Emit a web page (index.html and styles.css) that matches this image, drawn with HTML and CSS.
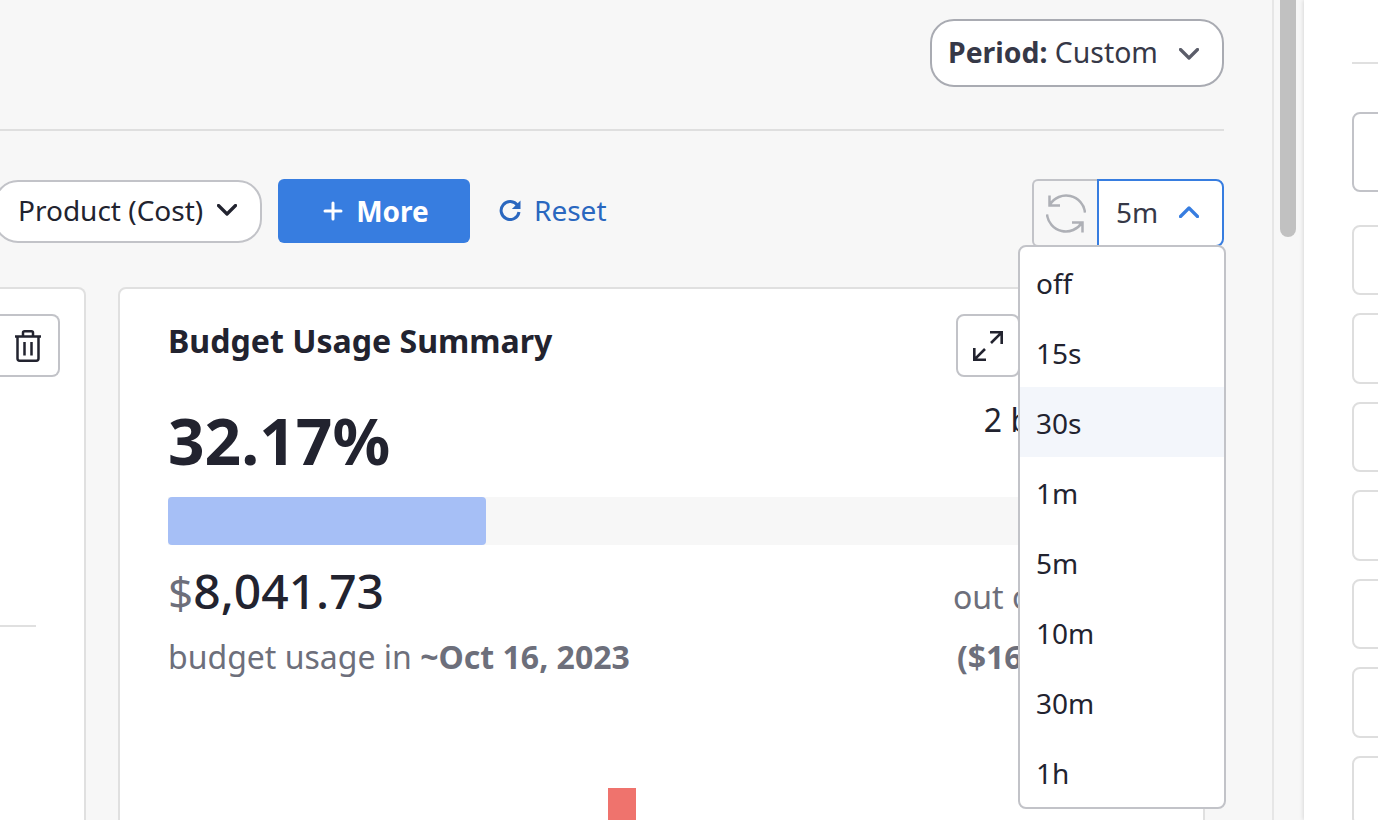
FILE: index.html
```html
<!DOCTYPE html>
<html>
<head>
	<title>Budget Usage Summary</title>
	<meta charset="utf-8">
	<link rel="stylesheet" href="styles.css">
</head>
<body>

<div class="page">
	<div class="main">
		<div class="topbar">
			<button class="period">
				<span><b>Period:</b> Custom</span>
				<svg class="chevron" viewBox="0 0 20 12"><path d="M1.5 1.5 10 10l8.5-8.5"/></svg>
			</button>
		</div>

		<div class="filters">
			<button class="pill">
				<span>Product (Cost)</span>
				<svg class="chevron dark" viewBox="0 0 20 12"><path d="M1.5 1.5 10 10l8.5-8.5"/></svg>
			</button>
			<button class="more">
				<svg class="plus" viewBox="0 0 20 20"><path d="M10 2v16M2 10h16"/></svg>
				More
			</button>
			<a class="reset">
				<svg viewBox="0 0 22 22"><path class="arc" d="M18.6 6.5A9 9 0 1 0 20 13"/><path class="head" d="M21.5 1.5v8.6h-8.6z"/></svg>
				Reset
			</a>
			<div class="refresh">
				<div class="refresh-btn">
					<svg viewBox="0 0 40 40"><path d="M4 11A19 19 0 0 1 39 19M3.5 2v10H14M1 21a19 19 0 0 0 35 8M26 29h10.500v10"/></svg>
				</div>
				<div class="interval">
					<span>5m</span>
					<svg class="chevron blue" viewBox="0 0 20 12"><path d="M1.500 10.500 10 2l8.500 8.500"/></svg>
				</div>
				<ul class="menu">
					<li>off</li>
					<li>15s</li>
					<li class="hover">30s</li>
					<li>1m</li>
					<li>5m</li>
					<li>10m</li>
					<li>30m</li>
					<li>1h</li>
				</ul>
			</div>
		</div>

		<div class="cards">
			<div class="card card-cut">
				<div class="card-head">
					<button class="icon-btn">
						<svg class="trash" viewBox="0 0 28 32"><path d="M1 6.500h26M9 6V2.800C9 1.800 9.800 1.300 10.600 1.300h6.800c.8 0 1.600.5 1.600 1.500V6M3.500 6.500v22c0 1.300.9 2.200 2.200 2.200h16.600c1.300 0 2.200-.9 2.200-2.200v-22M10.500 12v13.500M17.500 12v13.500"/></svg>
					</button>
				</div>
				<div class="cut-line"></div>
			</div>

			<div class="card card-main">
				<div class="card-head">
					<h2>Budget Usage Summary</h2>
					<div class="actions">
						<button class="icon-btn">
							<svg class="expand" viewBox="0 0 30 30"><path d="M17 1.300h11.700V13M28.700 1.300 18 12M13 28.700H1.300V17M1.300 28.700 12 18"/></svg>
						</button>
						<button class="icon-btn"></button>
						<button class="icon-btn"></button>
					</div>
				</div>
				<div class="card-body">
					<div class="stats">
						<div class="percent">32.17%</div>
						<div class="cell count">2 budgets</div>
					</div>
					<div class="bar"><div class="bar-fill" style="width: 32.17%"></div></div>
					<div class="amounts">
						<div class="amount"><span class="dollar">$</span>8,041.73</div>
						<div class="cell total">out of $25,000</div>
					</div>
					<div class="notes">
						<div>budget usage in <b>~Oct 16, 2023</b></div>
						<div class="cell remaining"><b>($16,958.27)</b></div>
					</div>
					<div class="chart"><div class="chart-bar"></div></div>
				</div>
			</div>
		</div>
	</div>

	<div class="gutter"><div class="thumb"></div></div>

	<div class="side">
		<div class="side-line"></div>
		<div class="side-box first"></div>
		<div class="side-list">
			<div class="side-box"></div>
			<div class="side-box"></div>
			<div class="side-box"></div>
			<div class="side-box"></div>
			<div class="side-box"></div>
			<div class="side-box"></div>
			<div class="side-box"></div>
		</div>
	</div>
</div>

</body>
</html>
```

FILE: styles.css
```css
* {
	box-sizing: border-box;
}
body {
	margin: 0;
	font-family: "Noto Sans", sans-serif;
	color: #22232f;
	background: #f7f7f7;
}
button {
	font-family: inherit;
	cursor: pointer;
}
.page {
	display: flex;
	height: 820px;
	overflow: hidden;
}
.main {
	flex: none;
	width: 1274px;
	height: 820px;
	padding-right: 48px;
	border-right: 2px solid #e6e6e6;
	overflow: hidden;
}
.topbar {
	display: flex;
	justify-content: flex-end;
	height: 131px;
	padding-top: 19px;
	border-bottom: 2px solid #dfdfdf;
}
.chevron {
	flex: none;
	width: 20px;
	height: 12px;
	fill: none;
	stroke: #5b5d69;
	stroke-width: 3.2;
	stroke-linecap: round;
	stroke-linejoin: round;
}
.chevron.dark {
	stroke: #22232f;
}
.chevron.blue {
	stroke: #377de0;
}
.period {
	display: flex;
	align-items: center;
	justify-content: space-between;
	width: 294px;
	height: 68px;
	padding: 0 23px 0 16px;
	border: 2px solid #a9abb2;
	border-radius: 24px;
	background: #fff;
	color: #363847;
	font-size: 28.400px;
}
.period span {
	margin-bottom: 2px;
}
.period .chevron {
	margin-top: 1px;
}
.filters {
	display: flex;
	align-items: flex-start;
	height: 108px;
	margin-top: 48px;
}
.pill {
	display: flex;
	align-items: center;
	gap: 14px;
	width: 268px;
	height: 63px;
	margin: 1px 0 0 -6px;
	padding: 0 22px 4px 22px;
	border: 2px solid #c2c3c8;
	border-radius: 24px;
	background: #fff;
	color: #22232f;
	font-size: 28px;
	white-space: nowrap;
}
.more {
	display: flex;
	align-items: center;
	justify-content: center;
	gap: 13px;
	width: 192px;
	height: 64px;
	margin-left: 16px;
	padding: 0 0 0 4px;
	border: 0;
	border-radius: 6px;
	background: #377de0;
	color: #fff;
	font-size: 28px;
	font-weight: 700;
}
.plus {
	width: 20px;
	height: 20px;
	fill: none;
	stroke: #fff;
	stroke-width: 3;
	stroke-linecap: round;
}
.reset {
	display: flex;
	align-items: center;
	gap: 13px;
	height: 62px;
	margin-left: 29px;
	color: #2a67bf;
	font-size: 28px;
}
.reset svg {
	width: 22px;
	height: 22px;
}
.reset .arc {
	fill: none;
	stroke: #2a67bf;
	stroke-width: 3;
}
.reset .head {
	fill: #2a67bf;
}
.refresh {
	position: relative;
	display: flex;
	height: 68px;
	margin-left: auto;
}
.refresh-btn {
	display: flex;
	align-items: center;
	justify-content: center;
	width: 65px;
	border: 2px solid #c2c3c8;
	border-right: 0;
	border-radius: 6px 0 0 6px;
}
.refresh-btn svg {
	width: 40px;
	height: 41px;
	fill: none;
	stroke: #aeb0b6;
	stroke-width: 2.500;
}
.interval {
	display: flex;
	align-items: center;
	justify-content: space-between;
	width: 127px;
	padding: 0 23px 2px 17px;
	border: 2px solid #377de0;
	border-radius: 0 8px 8px 0;
	background: #fff;
	color: #363847;
	font-size: 28px;
}
.menu {
	position: absolute;
	z-index: 5;
	top: 66px;
	right: -2px;
	width: 208px;
	margin: 0;
	padding: 0;
	list-style: none;
	background: #fff;
	border: 2px solid #c2c3c8;
	border-radius: 8px;
}
.menu li {
	height: 70px;
	padding-left: 16px;
	font-size: 28px;
	line-height: 72px;
}
.menu .hover {
	background: #f3f6fb;
}
.cards {
	display: flex;
	gap: 32px;
	height: 560px;
}
.card {
	background: #fff;
	border: 2px solid #e0e0e0;
	border-radius: 8px;
}
.card-cut {
	flex: none;
	width: 86px;
	border-left: 0;
	border-radius: 0 8px 0 0;
}
.card-main {
	flex: none;
	width: 1087px;
}
.card-head {
	display: flex;
	align-items: center;
	justify-content: space-between;
	padding: 25px 24px 0 48px;
}
.card-cut .card-head {
	justify-content: flex-end;
	padding-left: 0;
}
.card-head h2 {
	margin: 0 0 9px;
	font-size: 32.100px;
	font-weight: 700;
	line-height: 44px;
}
.actions {
	display: flex;
	gap: 15.500px;
}
.icon-btn {
	display: flex;
	align-items: center;
	justify-content: center;
	width: 64px;
	height: 63px;
	padding: 0;
	border: 2px solid #c2c3c8;
	border-radius: 8px;
	background: #fff;
}
.card-cut .icon-btn {
	border-left: 0;
	border-radius: 0 8px 8px 0;
	flex: none;
	width: 60px;
	padding-right: 3px;
}
.trash {
	width: 28px;
	height: 32px;
	fill: none;
	stroke: #22232f;
	stroke-width: 2.500;
}
.expand {
	width: 30px;
	height: 30px;
	fill: none;
	stroke: #22232f;
	stroke-width: 2.600;
}
.cut-line {
	height: 2px;
	margin-top: 248px;
	margin-right: 48px;
	background: #e0e0e0;
}
.card-body {
	padding: 0 47px 0 48px;
}
.stats,
.amounts,
.notes {
	display: flex;
	justify-content: space-between;
}
.stats {
	align-items: flex-start;
	height: 120px;
}
.cell {
	flex: none;
	width: 220px;
	margin-right: -15px;
	text-align: center;
}
.percent {
	margin-top: 20px;
	font-size: 64px;
	font-weight: 700;
	line-height: 88px;
}
.count {
	margin-top: 22px;
	margin-right: -13px;
	font-size: 32px;
	line-height: 42px;
}
.bar {
	height: 48px;
	background: #f7f7f7;
}
.bar-fill {
	height: 100%;
	background: #a6bff6;
	border-radius: 4px;
}
.amounts {
	align-items: center;
	height: 90px;
}
.amount {
	font-size: 48px;
	font-weight: 500;
}
.dollar {
	color: #6d6f7b;
	font-size: 44px;
	font-weight: 400;
}
.total {
	margin-top: 12px;
	font-size: 32px;
	color: #6d6f7b;
}
.notes {
	margin-top: 2px;
	font-size: 32px;
	line-height: 40px;
	color: #6d6f7b;
}
.remaining {
	margin-right: -4px;
}
.chart {
	position: relative;
	height: 111px;
}
.chart-bar {
	position: absolute;
	left: 440px;
	top: 111px;
	width: 28px;
	height: 40px;
	background: #ef736d;
}
.gutter {
	flex: none;
	width: 30px;
	padding-left: 6px;
}
.thumb {
	width: 16px;
	height: 237px;
	background: #c1c1c1;
	border-radius: 0 0 8px 8px;
}
.side {
	flex: 1;
	height: 820px;
	padding: 62px 0 0 48px;
	background: #fff;
	box-shadow: -1px 0 4px rgba(0, 0, 0, 0.12);
}
.side-line {
	height: 2px;
	margin-bottom: 48px;
	background: #e0e0e0;
}
.side-box {
	flex: none;
	width: 60px;
	height: 70.500px;
	background: #fff;
	border: 2px solid #dedede;
	border-radius: 8px;
}
.side-box.first {
	height: 80px;
	border-color: #c2c3c8;
}
.side-list {
	display: flex;
	flex-direction: column;
	gap: 18px;
	margin-top: 32.500px;
}
```
